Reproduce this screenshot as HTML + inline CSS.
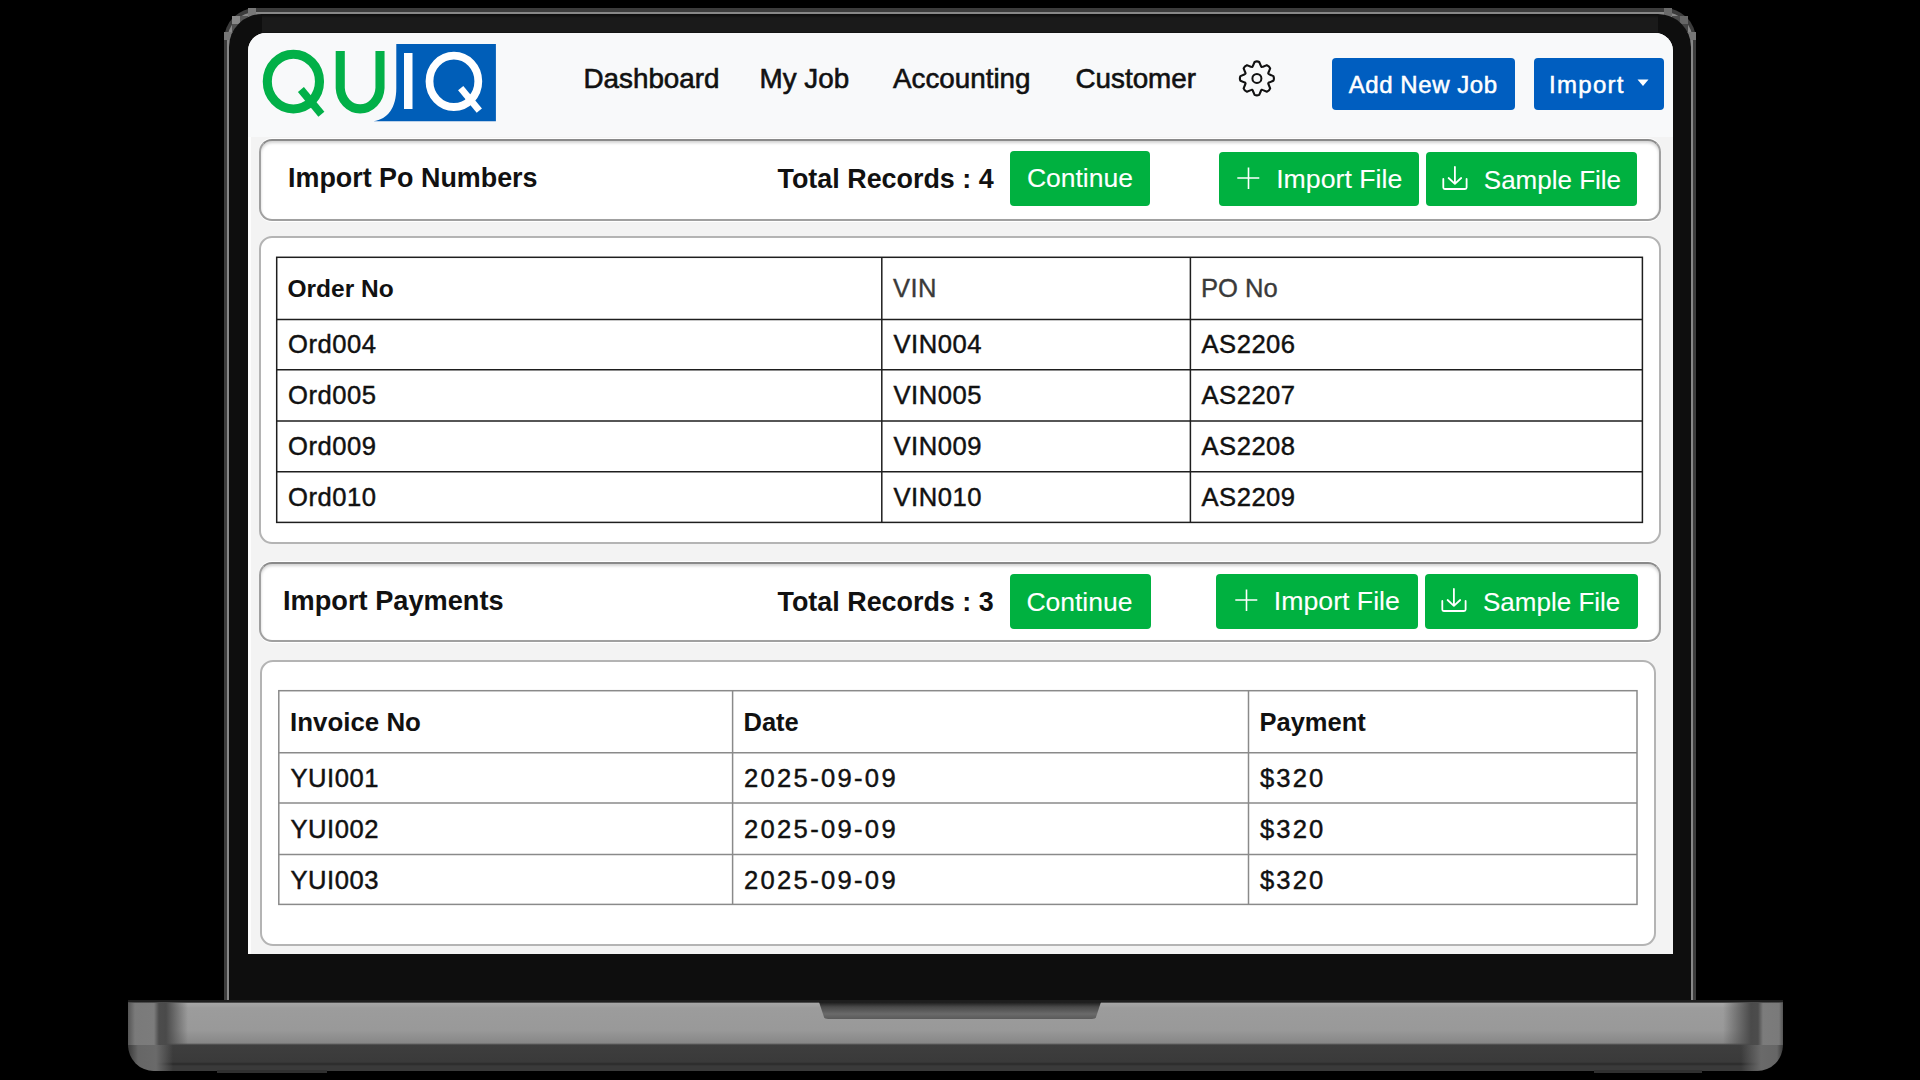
<!DOCTYPE html>
<html>
<head>
<meta charset="utf-8">
<style>
html,body{margin:0;padding:0;}
body{width:1920px;height:1080px;background:#000;position:relative;overflow:hidden;font-family:"Liberation Sans",sans-serif;}
.abs{position:absolute;}
.t{position:absolute;white-space:nowrap;line-height:1;}
#outline{left:224px;top:8px;width:1472px;height:1000px;border-radius:32px 32px 0 0;background:#3c3c3c;}
#outline2{left:227px;top:12px;width:1466px;height:996px;border-radius:29px 29px 0 0;background:#888;}
#bezel{left:229px;top:13.5px;width:1462px;height:994px;border-radius:33px 33px 0 0;background:#0e0e0e;}
#bezeltop{left:262px;top:15px;width:1396px;height:18px;background:linear-gradient(to bottom,#0e0e0e 0,#1a1a1a 3px,#1a1a1a 17px,#0e0e0e 18px);}
#screen{left:248px;top:33px;width:1425px;height:921px;border-radius:18px 18px 0 0;background:#f3f3f3;overflow:hidden;}
#base{left:128px;top:1000px;width:1655px;height:71px;border-radius:0 0 30px 30px;
  background:linear-gradient(to bottom,#1e1e1e 0px,#1e1e1e 2px,#a6a6a6 3.5px,#9c9c9c 8px,#999 30px,#878787 43px,#3e3e3e 45px,#3a3a3a 62px,#2a2a2a 64px,#3a3a3a 66px,#3a3a3a 71px);}
#notch{left:819px;top:1002px;width:282px;height:17px;border-radius:0 0 9px 9px;clip-path:polygon(0 0,100% 0,98% 100%,2% 100%);background:linear-gradient(to bottom,#1a1a1a 0,#4a4a4a 5px,#6a6a6a 12px,#5a5a5a 17px);}
.card{position:absolute;background:#fff;border:2px solid #a0a0a0;border-top-color:#8a8a8a;border-radius:13px;box-sizing:border-box;box-shadow:inset 0 2px 3px rgba(0,0,0,0.18),0 1px 0 #fff,0 -1px 0 #fff;}
.card2{position:absolute;background:#fff;border:2px solid #b4b4b4;border-radius:13px;box-sizing:border-box;}
.btn{position:absolute;border-radius:4px;}
.green{background:#00b140;}
.blue{background:#005ec0;}
</style>
</head>
<body>
<div id="outline" class="abs"></div>
<div id="outline2" class="abs"></div>
<div class="abs" style="left:248px;top:8px;width:8px;height:8px;background:#777"></div><div class="abs" style="left:240px;top:16px;width:8px;height:8px;background:#555"></div><div class="abs" style="left:232px;top:16px;width:8px;height:8px;background:#888"></div><div class="abs" style="left:232px;top:24px;width:8px;height:8px;background:#505050"></div><div class="abs" style="left:224px;top:32px;width:8px;height:8px;background:#777"></div><div class="abs" style="left:1664px;top:8px;width:8px;height:8px;background:#6a6a6a"></div><div class="abs" style="left:1672px;top:16px;width:8px;height:8px;background:#4a4a4a"></div><div class="abs" style="left:1680px;top:16px;width:8px;height:8px;background:#666"></div><div class="abs" style="left:1680px;top:24px;width:8px;height:8px;background:#444"></div><div class="abs" style="left:1688px;top:32px;width:8px;height:8px;background:#777"></div>
<div id="bezel" class="abs"></div>
<div id="bezeltop" class="abs"></div>
<div id="base" class="abs"></div>
<div id="notch" class="abs"></div>
<div class="abs" style="left:128px;top:1003px;width:62px;height:42px;background:linear-gradient(to right,#555 0,#7a7a7a 7px,#7c7c7c 26px,#4c4c4c 31px,#4a4a4a 38px,rgba(140,140,140,0) 60px)"></div>
<div class="abs" style="left:128px;top:1045px;width:50px;height:26px;border-bottom-left-radius:30px;background:linear-gradient(to right,#3a3a3a 0,#666 10px,#6a6a6a 28px,rgba(60,60,60,0) 45px)"></div>
<div class="abs" style="left:1721px;top:1003px;width:62px;height:42px;background:linear-gradient(to left,#555 0,#7a7a7a 4px,#7c7c7c 20px,#4c4c4c 25px,#4a4a4a 32px,rgba(140,140,140,0) 60px)"></div>
<div class="abs" style="left:1733px;top:1045px;width:50px;height:26px;border-bottom-right-radius:30px;background:linear-gradient(to left,#3a3a3a 0,#666 6px,#6a6a6a 22px,rgba(60,60,60,0) 42px)"></div>
<div class="abs" style="left:217px;top:1070px;width:110px;height:3px;background:#303030"></div>
<div class="abs" style="left:1594px;top:1070px;width:108px;height:3px;background:#303030"></div>
<div id="screen" class="abs"><div class="abs" style="left:0;top:0;width:1425px;height:104px;background:#f8f9fa"></div><div class="abs" style="left:0;top:104px;width:3px;height:817px;background:#fdfdfd"></div></div>
<svg class="abs" style="left:0;top:0" width="1920" height="1080" viewBox="0 0 1920 1080">
<ellipse cx="293.4" cy="81.6" rx="26.1" ry="27.4" fill="none" stroke="#02b048" stroke-width="9.1"/>
<line x1="300.9" y1="89.5" x2="321.4" y2="114.2" stroke="#02b048" stroke-width="7.8"/>
<path d="M340.25,51 V88 A19.9,22 0 0 0 380,88 V51" fill="none" stroke="#02b048" stroke-width="9.1"/>
<path d="M396.3,43.9 H495.9 V121.3 H373.5 C388,119 396.3,108 396.3,88 Z" fill="#005eb8"/>
<rect x="404" y="53" width="8.5" height="56" fill="#fff"/>
<ellipse cx="453.9" cy="81.3" rx="24.4" ry="25.7" fill="none" stroke="#fff" stroke-width="7.8"/>
<line x1="460.7" y1="88.1" x2="479.3" y2="110.6" stroke="#fff" stroke-width="6.8"/>
</svg>
<div class="t" style="left:583.5px;top:65.1px;font-size:27.8px;font-weight:400;color:#111;-webkit-text-stroke:0.6px #111;">Dashboard</div>
<div class="t" style="left:759.5px;top:65.1px;font-size:27.8px;font-weight:400;color:#111;-webkit-text-stroke:0.6px #111;">My Job</div>
<div class="t" style="left:893.0px;top:65.1px;font-size:27.8px;font-weight:400;color:#111;-webkit-text-stroke:0.6px #111;">Accounting</div>
<div class="t" style="left:1075.5px;top:65.1px;font-size:27.8px;font-weight:400;color:#111;-webkit-text-stroke:0.6px #111;">Customer</div>
<svg class="abs" style="left:0;top:0" width="1920" height="1080" viewBox="0 0 1920 1080">
<path d="M1254.59,61.96 Q1256.90,60.80 1259.21,61.96 L1260.87,65.81 Q1261.34,67.68 1263.00,66.69 L1266.89,65.14 Q1269.35,65.95 1270.16,68.41 L1268.61,72.30 Q1267.62,73.96 1269.49,74.43 L1273.34,76.09 Q1274.50,78.40 1273.34,80.71 L1269.49,82.37 Q1267.62,82.84 1268.61,84.50 L1270.16,88.39 Q1269.35,90.85 1266.89,91.66 L1263.00,90.11 Q1261.34,89.12 1260.87,90.99 L1259.21,94.84 Q1256.90,96.00 1254.59,94.84 L1252.93,90.99 Q1252.46,89.12 1250.80,90.11 L1246.91,91.66 Q1244.45,90.85 1243.64,88.39 L1245.19,84.50 Q1246.18,82.84 1244.31,82.37 L1240.46,80.71 Q1239.30,78.40 1240.46,76.09 L1244.31,74.43 Q1246.18,73.96 1245.19,72.30 L1243.64,68.41 Q1244.45,65.95 1246.91,65.14 L1250.80,66.69 Q1252.46,67.68 1252.93,65.81 L1254.59,61.96 Z" fill="none" stroke="#111" stroke-width="2.1" stroke-linejoin="round"/>
<circle cx="1256.9" cy="78.4" r="4.5" fill="none" stroke="#111" stroke-width="2.0"/>
</svg>
<div class="abs btn blue" style="left:1332.2px;top:58.3px;width:182.4px;height:51.4px;"></div>
<div class="t" style="left:1348.8px;top:72.7px;font-size:24px;font-weight:400;color:#fff;letter-spacing:0.55px;-webkit-text-stroke:0.5px #fff;">Add New Job</div>
<div class="abs btn blue" style="left:1533.5px;top:58.3px;width:130.6px;height:51.4px;"></div>
<div class="t" style="left:1549.0px;top:72.7px;font-size:24px;font-weight:400;color:#fff;letter-spacing:1.3px;-webkit-text-stroke:0.5px #fff;">Import</div>
<svg class="abs" style="left:1637px;top:79px" width="12" height="8" viewBox="0 0 12 8"><path d="M0.5,0.5 H11.5 L6,7 Z" fill="#fff"/></svg>
<div class="card" style="left:259px;top:138.5px;width:1402px;height:82.5px"></div>
<div class="t" style="left:288.0px;top:165.2px;font-size:26.9px;font-weight:700;color:#111;">Import Po Numbers</div>
<div class="t" style="left:777.5px;top:165.7px;font-size:26.9px;font-weight:700;color:#111;">Total Records : 4</div>
<div class="abs btn green" style="left:1010.4px;top:150.6px;width:139.6px;height:55.6px;"></div>
<div class="t" style="left:1026.9px;top:165.1px;font-size:26.5px;font-weight:400;color:#fff;-webkit-text-stroke:0.1px #fff;">Continue</div>
<div class="abs btn green" style="left:1218.75px;top:152px;width:200.5px;height:54.2px;"></div>
<svg class="abs" style="left:1237.25px;top:167px" width="23" height="23" viewBox="0 0 23 23"><path d="M11.5,0.5 V22 M0.3,11 H22.3" stroke="#fff" stroke-width="1.6" fill="none"/></svg>
<div class="t" style="left:1276.2px;top:165.9px;font-size:26.7px;font-weight:400;color:#fff;-webkit-text-stroke:0.1px #fff;">Import File</div>
<div class="abs btn green" style="left:1425.75px;top:152px;width:211.0px;height:54.2px;"></div>
<svg class="abs" style="left:1441.75px;top:166px" width="26" height="24" viewBox="0 0 26 24"><path d="M1.3,13 V21.5 Q1.3,23 2.8,23 H23 Q24.6,23 24.6,21.5 V13" stroke="#fff" stroke-width="1.8" fill="none" stroke-linecap="round"/><path d="M12.9,1 V17.2 M6.6,12 L12.9,17.8 L19.2,12" stroke="#fff" stroke-width="1.8" fill="none" stroke-linecap="round" stroke-linejoin="round"/></svg>
<div class="t" style="left:1483.8px;top:166.5px;font-size:26.0px;font-weight:400;color:#fff;-webkit-text-stroke:0.1px #fff;">Sample File</div>
<div class="card" style="left:259px;top:562px;width:1402px;height:80px"></div>
<div class="t" style="left:283.0px;top:587.3px;font-size:27.2px;font-weight:700;color:#111;">Import Payments</div>
<div class="t" style="left:777.5px;top:588.5px;font-size:26.9px;font-weight:700;color:#111;">Total Records : 3</div>
<div class="abs btn green" style="left:1009.9px;top:574.4px;width:141.3px;height:55.1px;"></div>
<div class="t" style="left:1026.4px;top:588.9px;font-size:26.5px;font-weight:400;color:#fff;-webkit-text-stroke:0.1px #fff;">Continue</div>
<div class="abs btn green" style="left:1216.25px;top:574.25px;width:202.0px;height:55.0px;"></div>
<svg class="abs" style="left:1234.75px;top:589.25px" width="23" height="23" viewBox="0 0 23 23"><path d="M11.5,0.5 V22 M0.3,11 H22.3" stroke="#fff" stroke-width="1.6" fill="none"/></svg>
<div class="t" style="left:1273.8px;top:588.1px;font-size:26.7px;font-weight:400;color:#fff;-webkit-text-stroke:0.1px #fff;">Import File</div>
<div class="abs btn green" style="left:1425px;top:574.25px;width:212.5px;height:55.0px;"></div>
<svg class="abs" style="left:1441px;top:588.25px" width="26" height="24" viewBox="0 0 26 24"><path d="M1.3,13 V21.5 Q1.3,23 2.8,23 H23 Q24.6,23 24.6,21.5 V13" stroke="#fff" stroke-width="1.8" fill="none" stroke-linecap="round"/><path d="M12.9,1 V17.2 M6.6,12 L12.9,17.8 L19.2,12" stroke="#fff" stroke-width="1.8" fill="none" stroke-linecap="round" stroke-linejoin="round"/></svg>
<div class="t" style="left:1483.0px;top:588.7px;font-size:26.0px;font-weight:400;color:#fff;-webkit-text-stroke:0.1px #fff;">Sample File</div>
<div class="card2" style="left:259.4px;top:235.5px;width:1401.5px;height:308.5px"></div>
<svg class="abs" style="left:0;top:0" width="1920" height="1080" viewBox="0 0 1920 1080"><rect x="276.7" y="257.3" width="1365.7" height="265.09999999999997" fill="none" stroke="#1e1e1e" stroke-width="1.5"/><line x1="276.7" y1="319.4" x2="1642.4" y2="319.4" stroke="#1e1e1e" stroke-width="1.5"/><line x1="276.7" y1="369.8" x2="1642.4" y2="369.8" stroke="#1e1e1e" stroke-width="1.5"/><line x1="276.7" y1="420.9" x2="1642.4" y2="420.9" stroke="#1e1e1e" stroke-width="1.5"/><line x1="276.7" y1="471.7" x2="1642.4" y2="471.7" stroke="#1e1e1e" stroke-width="1.5"/><line x1="881.8" y1="257.3" x2="881.8" y2="522.4" stroke="#1e1e1e" stroke-width="1.5"/><line x1="1190.4" y1="257.3" x2="1190.4" y2="522.4" stroke="#1e1e1e" stroke-width="1.5"/></svg>
<div class="t" style="left:287.5px;top:276.8px;font-size:24.5px;font-weight:700;color:#111;">Order No</div>
<div class="t" style="left:893.0px;top:275.8px;font-size:25.6px;font-weight:400;color:#3a3a3a;letter-spacing:0.4px;-webkit-text-stroke:0.35px #3a3a3a;">VIN</div>
<div class="t" style="left:1201.0px;top:275.8px;font-size:25.6px;font-weight:400;color:#3a3a3a;-webkit-text-stroke:0.35px #3a3a3a;">PO No</div>
<div class="t" style="left:288.0px;top:332.4px;font-size:25.6px;font-weight:400;color:#111;letter-spacing:0.5px;-webkit-text-stroke:0.45px #111;">Ord004</div>
<div class="t" style="left:893.5px;top:332.4px;font-size:25.6px;font-weight:400;color:#111;letter-spacing:0.5px;-webkit-text-stroke:0.45px #111;">VIN004</div>
<div class="t" style="left:1201.5px;top:332.4px;font-size:25.6px;font-weight:400;color:#111;letter-spacing:0.5px;-webkit-text-stroke:0.45px #111;">AS2206</div>
<div class="t" style="left:288.0px;top:383.1px;font-size:25.6px;font-weight:400;color:#111;letter-spacing:0.5px;-webkit-text-stroke:0.45px #111;">Ord005</div>
<div class="t" style="left:893.5px;top:383.1px;font-size:25.6px;font-weight:400;color:#111;letter-spacing:0.5px;-webkit-text-stroke:0.45px #111;">VIN005</div>
<div class="t" style="left:1201.5px;top:383.1px;font-size:25.6px;font-weight:400;color:#111;letter-spacing:0.5px;-webkit-text-stroke:0.45px #111;">AS2207</div>
<div class="t" style="left:288.0px;top:433.8px;font-size:25.6px;font-weight:400;color:#111;letter-spacing:0.5px;-webkit-text-stroke:0.45px #111;">Ord009</div>
<div class="t" style="left:893.5px;top:433.8px;font-size:25.6px;font-weight:400;color:#111;letter-spacing:0.5px;-webkit-text-stroke:0.45px #111;">VIN009</div>
<div class="t" style="left:1201.5px;top:433.8px;font-size:25.6px;font-weight:400;color:#111;letter-spacing:0.5px;-webkit-text-stroke:0.45px #111;">AS2208</div>
<div class="t" style="left:288.0px;top:484.5px;font-size:25.6px;font-weight:400;color:#111;letter-spacing:0.5px;-webkit-text-stroke:0.45px #111;">Ord010</div>
<div class="t" style="left:893.5px;top:484.5px;font-size:25.6px;font-weight:400;color:#111;letter-spacing:0.5px;-webkit-text-stroke:0.45px #111;">VIN010</div>
<div class="t" style="left:1201.5px;top:484.5px;font-size:25.6px;font-weight:400;color:#111;letter-spacing:0.5px;-webkit-text-stroke:0.45px #111;">AS2209</div>
<div class="card2" style="left:260px;top:659.5px;width:1395.5px;height:286px"></div>
<svg class="abs" style="left:0;top:0" width="1920" height="1080" viewBox="0 0 1920 1080"><rect x="278.8" y="690.7" width="1358.2" height="213.69999999999993" fill="none" stroke="#8a8a8a" stroke-width="1.5"/><line x1="278.8" y1="752.7" x2="1637" y2="752.7" stroke="#8a8a8a" stroke-width="1.5"/><line x1="278.8" y1="802.9" x2="1637" y2="802.9" stroke="#8a8a8a" stroke-width="1.5"/><line x1="278.8" y1="854.5" x2="1637" y2="854.5" stroke="#8a8a8a" stroke-width="1.5"/><line x1="732.6" y1="690.7" x2="732.6" y2="904.4" stroke="#8a8a8a" stroke-width="1.5"/><line x1="1248.5" y1="690.7" x2="1248.5" y2="904.4" stroke="#8a8a8a" stroke-width="1.5"/></svg>
<div class="t" style="left:290.0px;top:710.1px;font-size:25.9px;font-weight:700;color:#111;">Invoice No</div>
<div class="t" style="left:743.5px;top:710.4px;font-size:25.5px;font-weight:700;color:#111;">Date</div>
<div class="t" style="left:1259.5px;top:710.4px;font-size:25.5px;font-weight:700;color:#111;">Payment</div>
<div class="t" style="left:290.5px;top:765.9px;font-size:25.6px;font-weight:400;color:#111;letter-spacing:0.5px;-webkit-text-stroke:0.45px #111;">YUI001</div>
<div class="t" style="left:744.0px;top:765.9px;font-size:25.6px;font-weight:400;color:#111;letter-spacing:2.3px;-webkit-text-stroke:0.45px #111;">2025-09-09</div>
<div class="t" style="left:1260.0px;top:765.9px;font-size:25.6px;font-weight:400;color:#111;letter-spacing:2.1px;-webkit-text-stroke:0.45px #111;">$320</div>
<div class="t" style="left:290.5px;top:816.7px;font-size:25.6px;font-weight:400;color:#111;letter-spacing:0.5px;-webkit-text-stroke:0.45px #111;">YUI002</div>
<div class="t" style="left:744.0px;top:816.7px;font-size:25.6px;font-weight:400;color:#111;letter-spacing:2.3px;-webkit-text-stroke:0.45px #111;">2025-09-09</div>
<div class="t" style="left:1260.0px;top:816.7px;font-size:25.6px;font-weight:400;color:#111;letter-spacing:2.1px;-webkit-text-stroke:0.45px #111;">$320</div>
<div class="t" style="left:290.5px;top:867.5px;font-size:25.6px;font-weight:400;color:#111;letter-spacing:0.5px;-webkit-text-stroke:0.45px #111;">YUI003</div>
<div class="t" style="left:744.0px;top:867.5px;font-size:25.6px;font-weight:400;color:#111;letter-spacing:2.3px;-webkit-text-stroke:0.45px #111;">2025-09-09</div>
<div class="t" style="left:1260.0px;top:867.5px;font-size:25.6px;font-weight:400;color:#111;letter-spacing:2.1px;-webkit-text-stroke:0.45px #111;">$320</div>
</body>
</html>
